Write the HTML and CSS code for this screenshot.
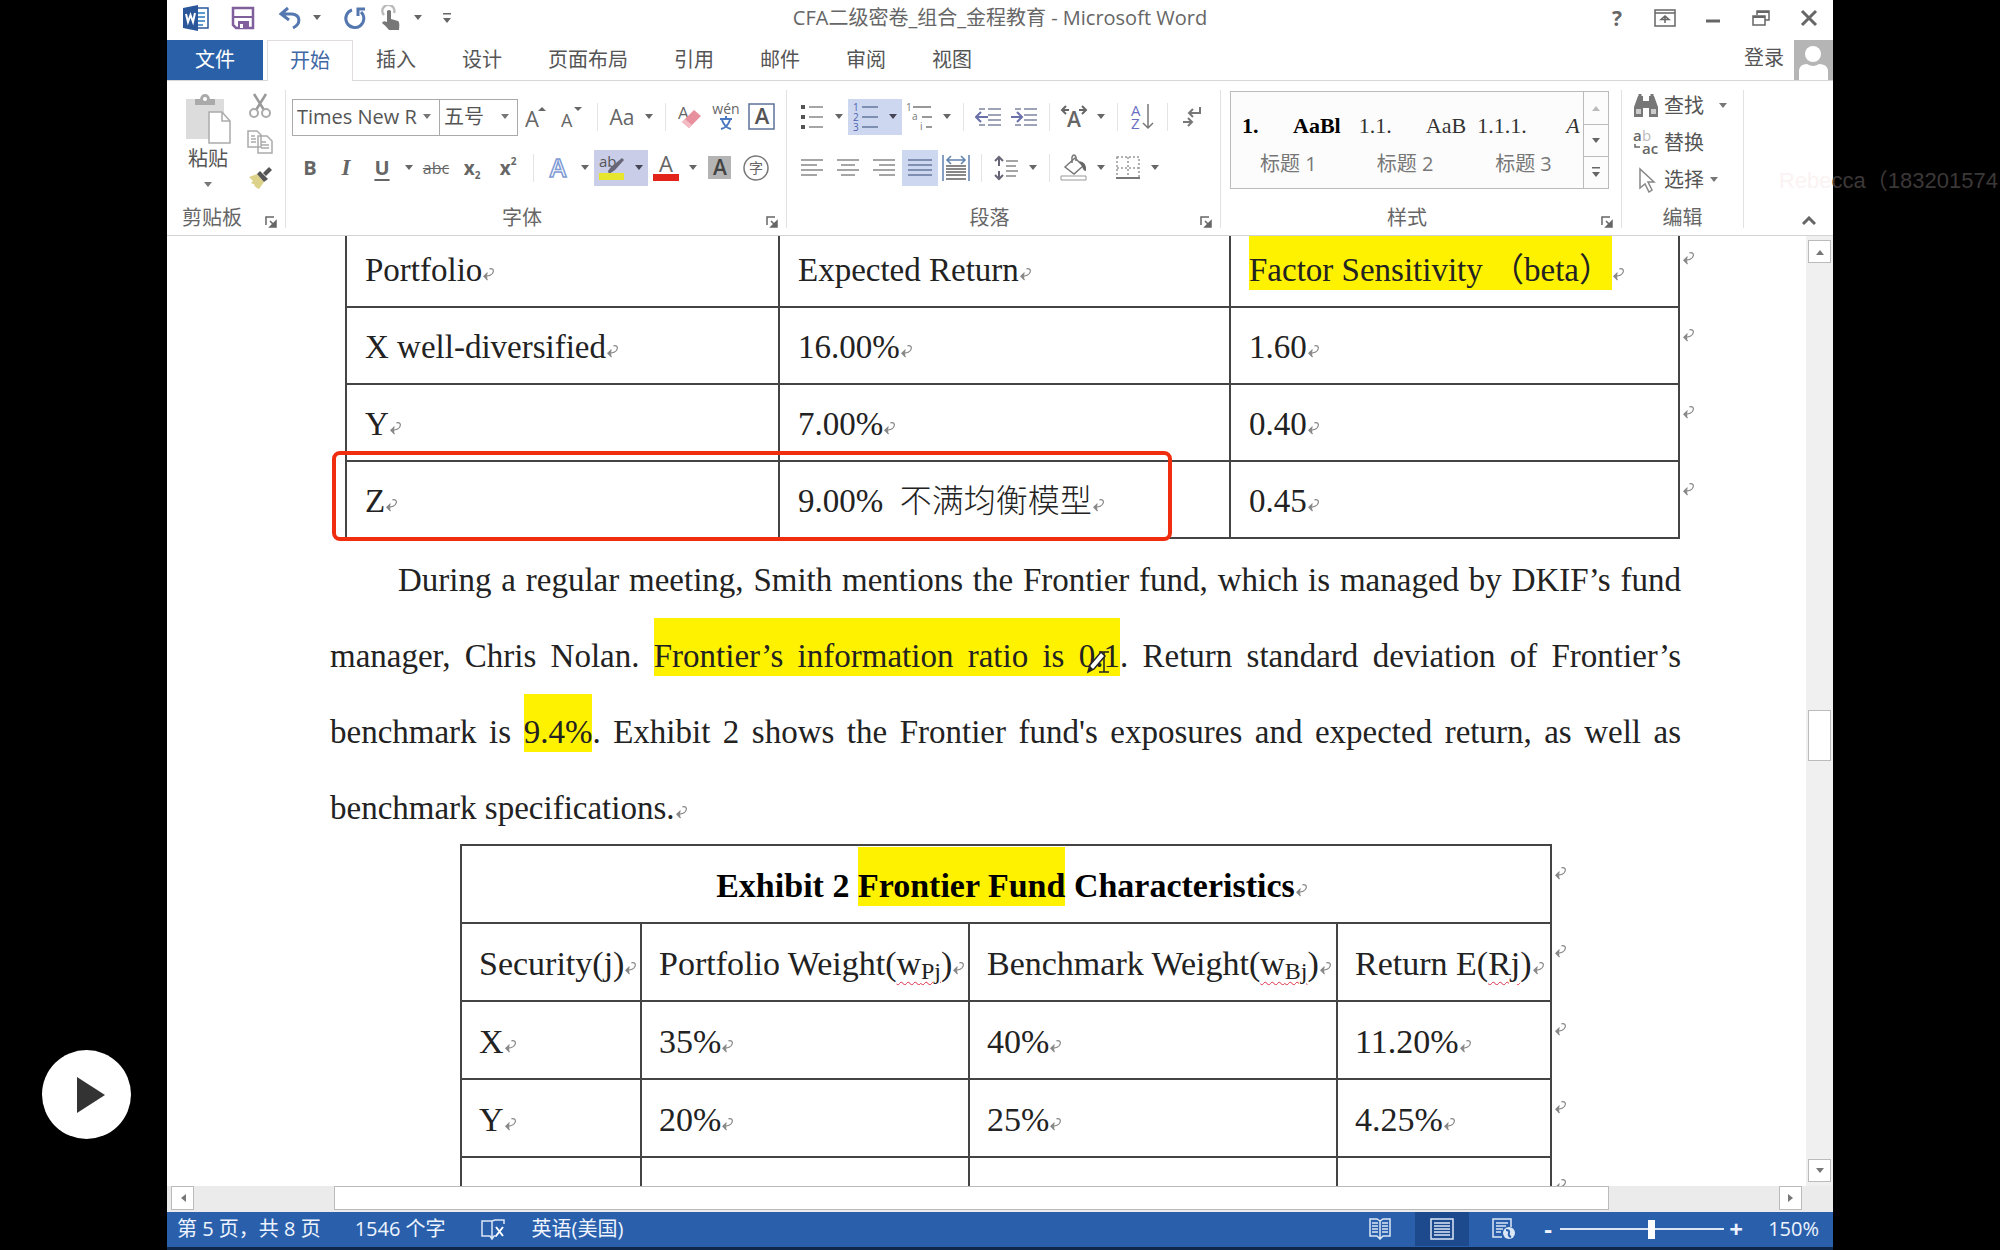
FILE: index.html
```
<!DOCTYPE html>
<html lang="zh-CN">
<head>
<meta charset="utf-8">
<title>CFA二级密卷_组合_金程教育 - Microsoft Word</title>
<link rel="stylesheet" href="styles.css">
</head>
<body>
<svg class="defs" aria-hidden="true">
  <symbol id="ret" viewBox="0 0 14 15"><path d="M8 2c3-1 5 1 4 3.500C11 8.500 7 10 2 10M6 6 2 10l4 4M2.500 10l2.500-2v4z" fill="none" stroke="currentColor" stroke-width="1.300"/></symbol>
  <symbol id="down" viewBox="0 0 10 6"><path d="M1 0h8L5 5z" fill="currentColor"/></symbol>
  <symbol id="launch" viewBox="0 0 12 12"><path d="M1 9V1h8M5 5l5 5M11 5v6H5z" fill="none" stroke="currentColor" stroke-width="1.500"/><path d="M11 5v6H5z" fill="currentColor"/></symbol>
</svg>

<div class="app">
  <header class="titlebar">
    <div class="qat">
      <span class="btn"><svg width="28" height="26" viewBox="0 0 28 26"><path d="M12 3h14v20H12z" fill="#fff" stroke="#2b579a" stroke-width="1.500"/><path d="M16 8h7M16 12h7M16 16h7M16 20h5" stroke="#2b7ac0" stroke-width="1.500"/><path d="M1 3 16 0v26L1 23z" fill="#2b579a"/><path d="m4 9 2 8 2.500-7L11 17l2-9" fill="none" stroke="#fff" stroke-width="2"/></svg></span>
      <button class="btn gap" title="保存"><svg width="24" height="24" viewBox="0 0 24 24"><path d="M2 2h20v20H5l-3-3z" fill="#fff" stroke="#80609c" stroke-width="2.500"/><path d="M3 11h18" stroke="#80609c" stroke-width="2"/><path d="M7 15h11v7H7z" fill="#80609c"/><path d="M9 18h3v4H9z" fill="#fff"/></svg></button>
      <button class="btn gap" title="撤消"><svg width="24" height="24" viewBox="0 0 24 24"><path d="M10 2 3 8l8 6M4 8h10c9 1 9 10 1 14" fill="none" stroke="#5577b0" stroke-width="3"/></svg></button>
      <button class="caret" title="撤消列表"><svg><use href="#down"/></svg></button>
      <button class="btn gap" title="重复"><svg width="24" height="24" viewBox="0 0 24 24"><path d="M9 4a9 9 0 1 0 9 2M15 10V3h7" fill="none" stroke="#5577b0" stroke-width="3"/></svg></button>
      <button class="btn" title="触摸/鼠标模式"><svg width="22" height="26" viewBox="0 0 22 26"><path d="M4 10a6 6 0 1 1 10-2" fill="none" stroke="#bbb" stroke-width="2.500"/><path d="M7 6q2-2 4 0v8l7 2q2 1 1 9H9q-3-4-7-7 1-3 5-1z" fill="#777"/></svg></button>
      <button class="caret" title="模式列表"><svg><use href="#down"/></svg></button>
      <button class="caret gap" title="自定义快速访问工具栏"><svg class="bar-down" viewBox="0 0 10 11"><path d="M1 0h8v1.500H1zM1 5h8L5 10z" fill="currentColor"/></svg></button>
    </div>
    <h1 class="doc-title">CFA二级密卷_组合_金程教育 - Microsoft Word</h1>
    <div class="winbtns">
      <button class="help" title="帮助">?</button>
      <button title="功能区显示选项"><svg width="22" height="18" viewBox="0 0 22 18"><path d="M1 1h20v16H1zM1 4h20M11 14V7M7 10.500 11 7l4 3.500z" fill="none" stroke="#666" stroke-width="1.500"/></svg></button>
      <button title="最小化"><svg width="16" height="18" viewBox="0 0 16 18"><path d="M1 12h14" stroke="#666" stroke-width="3"/></svg></button>
      <button title="向下还原"><svg width="18" height="18" viewBox="0 0 18 18"><path d="M5 6V2h12v9h-4M1 7h12v9H1z" fill="none" stroke="#666" stroke-width="1.500"/><path d="M5 3h12M1 8h12" stroke="#666" stroke-width="2"/></svg></button>
      <button title="关闭"><svg width="18" height="18" viewBox="0 0 18 18"><path d="m2 2 14 14M16 2 2 16" stroke="#666" stroke-width="3"/></svg></button>
    </div>
  </header>

  <nav class="tabs">
    <button class="tab file">文件</button>
    <button class="tab active">开始</button>
    <button class="tab">插入</button>
    <button class="tab">设计</button>
    <button class="tab">页面布局</button>
    <button class="tab">引用</button>
    <button class="tab">邮件</button>
    <button class="tab">审阅</button>
    <button class="tab">视图</button>
    <a class="login" href="#">登录</a>
    <svg class="avatar" viewBox="0 0 39 40"><path d="M0 0h39v40H0z" fill="#b5b5b5"/><circle cx="19" cy="14" r="8" fill="#fff"/><path d="M5 40V30q1-6 8-6 6 4 12 0 8 0 9 6v10z" fill="#fff"/></svg>
  </nav>

  <div class="ribbon">
    <section class="group">
      <div class="clip">
        <button class="paste">
          <svg width="46" height="50" viewBox="0 0 46 50"><path d="M1 5h38v40H1z" fill="#dcdcdc"/><path d="M10 5h5q1-5 5-5t5 5h5v6H10z" fill="#aaa"/><circle cx="20" cy="5" r="2" fill="#fff"/><path d="M24 18h13l8 9v22H24z" fill="#fff" stroke="#aaa" stroke-width="1.500"/><path d="M37 18v9h8" fill="none" stroke="#aaa" stroke-width="1.500"/></svg>
          <span>粘贴</span>
          <svg class="dn"><use href="#down"/></svg>
        </button>
        <div class="clip-side">
          <button title="剪切"><svg width="24" height="26" viewBox="0 0 24 26"><path d="M6 1l10 16M18 1 8 17" stroke="#999" stroke-width="2.500"/><circle cx="6" cy="20" r="4" fill="none" stroke="#aaa" stroke-width="2"/><circle cx="18" cy="20" r="4" fill="none" stroke="#aaa" stroke-width="2"/></svg></button>
          <button title="复制"><svg width="26" height="24" viewBox="0 0 26 24"><path d="M1 1h9l4 4v12H1zM11 6h9l5 5v12H11z" fill="#fff" stroke="#aaa" stroke-width="1.500"/><path d="M4 6h4M4 9h5M4 12h5M14 12h5M14 15h8M14 18h8" stroke="#aaa" stroke-width="1.500"/></svg></button>
          <button title="格式刷"><svg width="26" height="24" viewBox="0 0 26 24"><path d="m2 11 8-3 7 8-5 7q-5-2-5-5-1 0-3-1l2-2z" fill="#ddd28a"/><path d="m10 8 3-3 8 8-4 3z" fill="#555"/><path d="m16 7 6-6 3 3-6 6z" fill="#555"/></svg></button>
        </div>
      </div>
      <footer><span>剪贴板</span><button class="launch" title="剪贴板"><svg><use href="#launch"/></svg></button></footer>
    </section>

    <section class="group">
      <div class="row">
        <select class="font-name" aria-label="字体"><option>Times New Roman</option></select>
        <select class="font-size" aria-label="字号"><option>五号</option></select>
        <button class="btn" title="增大字号"><svg width="22" height="24" viewBox="0 0 22 24"><text x="0" y="22" font-size="22" fill="#666">A</text><path d="m13 6 4-4 4 4z" fill="#666"/></svg></button>
        <button class="btn" title="减小字号"><svg width="22" height="24" viewBox="0 0 22 24"><text x="0" y="22" font-size="18" fill="#666">A</text><path d="m13 2 4 4 4-4z" fill="#666"/></svg></button>
        <i class="sep"></i>
        <button class="btn aa" title="更改大小写">Aa</button><button class="caret" title="大小写选项"><svg><use href="#down"/></svg></button>
        <i class="sep"></i>
        <button class="btn" title="清除格式"><svg width="24" height="26" viewBox="0 0 24 26"><text x="0" y="15" font-size="17" fill="#666">A</text><path d="m4 18 12-12 7 6-12 12z" fill="#e88f9d"/><path d="m4 18 3-3 7 6-3 3z" fill="#f3bcc4"/></svg></button>
        <button class="btn" title="拼音指南"><svg width="28" height="28" viewBox="0 0 28 28"><text x="14" y="11" font-size="14" text-anchor="middle" fill="#666">wén</text><path d="M8 16h12M14 13v3M10 17q3 8 9 9M18 17q-3 8-9 9" fill="none" stroke="#4a78c0" stroke-width="2"/></svg></button>
        <button class="btn" title="字符边框"><svg width="28" height="28" viewBox="0 0 28 28"><path d="M1 1h25v25H1z" fill="#fff" stroke="#5d7299" stroke-width="1.500"/><text x="14" y="21" font-size="22" font-weight="600" text-anchor="middle" fill="#555">A</text></svg></button>
      </div>
      <div class="row">
        <button class="btn b" title="加粗">B</button>
        <button class="btn i" title="倾斜">I</button>
        <button class="btn u" title="下划线">U</button><button class="caret" title="下划线选项"><svg><use href="#down"/></svg></button>
        <button class="btn abc" title="删除线">abc</button>
        <button class="btn x" title="下标">x<sub>2</sub></button>
        <button class="btn x" title="上标">x<sup>2</sup></button>
        <i class="sep"></i>
        <button class="btn" title="文本效果"><svg width="24" height="26" viewBox="0 0 24 26"><text x="12" y="22" font-size="25" font-weight="600" text-anchor="middle" fill="#fff" stroke="#7f9bd4" stroke-width="1.500">A</text></svg></button><button class="caret" title="文本效果选项"><svg><use href="#down"/></svg></button>
        <span class="on hl"><button class="btn" title="突出显示"><svg width="28" height="28" viewBox="0 0 28 28"><text x="1" y="13" font-size="15" fill="#555">ab</text><path d="m10 17 3-4L24 4l2 2-9 10-6 4z" fill="#667"/><path d="M1 19h25v7H1z" fill="#e6e62e"/></svg></button><button class="caret" title="突出显示颜色"><svg><use href="#down"/></svg></button></span>
        <button class="btn" title="字体颜色"><svg width="26" height="28" viewBox="0 0 26 28"><text x="13" y="18" font-size="22" text-anchor="middle" fill="#666">A</text><path d="M0 20h26v7H0z" fill="#e3241b"/></svg></button><button class="caret" title="字体颜色选项"><svg><use href="#down"/></svg></button>
        <button class="btn" title="字符底纹"><svg width="24" height="24" viewBox="0 0 24 24"><path d="M0 0h23v23H0z" fill="#b4b4b4"/><text x="12" y="19" font-size="21" font-weight="600" text-anchor="middle" fill="#444">A</text></svg></button>
        <button class="btn" title="带圈字符"><svg width="28" height="28" viewBox="0 0 28 28"><circle cx="14" cy="14" r="12" fill="none" stroke="#777" stroke-width="1.500"/><text x="14" y="19" font-size="14" text-anchor="middle" fill="#666">字</text></svg></button>
      </div>
      <footer><span>字体</span><button class="launch" title="字体"><svg><use href="#launch"/></svg></button></footer>
    </section>

    <section class="group para">
      <div class="row">
        <button class="btn" title="项目符号"><svg width="24" height="24" viewBox="0 0 24 24"><path d="M1 0h4v4H1zM1 10h4v4H1zM1 20h4v4H1z" fill="#555"/><path d="M9 2h14M9 12h14M9 22h14" stroke="#888" stroke-width="1.500"/></svg></button><button class="caret" title="项目符号库"><svg><use href="#down"/></svg></button>
        <span class="on"><button class="btn" title="编号"><svg width="26" height="28" viewBox="0 0 26 28"><g font-size="10" fill="#4c63b0"><text x="0" y="8">1</text><text x="0" y="18">2</text><text x="0" y="28">3</text></g><path d="M9 4h16M9 14h16M9 24h16" stroke="#66789c" stroke-width="1.500"/></svg></button><button class="caret" title="编号库"><svg><use href="#down"/></svg></button></span>
        <button class="btn" title="多级列表"><svg width="28" height="28" viewBox="0 0 28 28"><g font-size="10" fill="#777"><text x="0" y="8">1</text><text x="6" y="17">a</text><text x="14" y="27">i</text></g><path d="M7 4h18M16 14h10M20 24h6" stroke="#777" stroke-width="1.500"/></svg></button><button class="caret" title="多级列表库"><svg><use href="#down"/></svg></button>
        <i class="sep"></i>
        <button class="btn" title="减少缩进量"><svg width="26" height="20" viewBox="0 0 26 20"><path d="M4 2h6M13 2h13M13 8h13M13 13h13M4 18h6M13 18h13" stroke="#7d86a0" stroke-width="1.500"/><path d="M1 10h12M6 5l-5 5 5 5" fill="none" stroke="#6a70a8" stroke-width="2"/></svg></button>
        <button class="btn" title="增加缩进量"><svg width="26" height="20" viewBox="0 0 26 20"><path d="M4 2h6M13 2h13M13 8h13M13 13h13M4 18h6M13 18h13" stroke="#7d86a0" stroke-width="1.500"/><path d="M0 10h11M6 5l5 5-5 5" fill="none" stroke="#6a70a8" stroke-width="2"/></svg></button>
        <i class="sep"></i>
        <button class="btn" title="中文版式"><svg width="28" height="24" viewBox="0 0 28 24"><text x="14" y="22" font-size="21" font-weight="600" text-anchor="middle" fill="#666">A</text><path d="M9 5H3M6 1 2 5l4 4M19 5h6M22 1l4 4-4 4" fill="none" stroke="#666" stroke-width="2"/></svg></button><button class="caret" title="中文版式选项"><svg><use href="#down"/></svg></button>
        <i class="sep"></i>
        <button class="btn" title="排序"><svg width="24" height="28" viewBox="0 0 24 28"><g font-size="15" fill="#6a6fc0"><text x="1" y="13">A</text><text x="1" y="26">Z</text></g><path d="M18 1v23M13 20l5 5 5-5" fill="none" stroke="#777" stroke-width="1.500"/></svg></button>
        <i class="sep"></i>
        <button class="btn" title="显示编辑标记"><svg width="20" height="22" viewBox="0 0 20 22"><path d="M18 1v6H8M11 3 7 7l4 4M1 16h8M6 12l4 4-4 4" fill="none" stroke="#777" stroke-width="2"/></svg></button>
      </div>
      <div class="row">
        <button class="btn" title="左对齐"><svg width="22" height="18" viewBox="0 0 22 18"><path d="M0 1h22M0 6h16M0 11h22M0 16h16" stroke="#888" stroke-width="1.500"/></svg></button>
        <button class="btn" title="居中"><svg width="22" height="18" viewBox="0 0 22 18"><path d="M0 1h22M4 6h14M0 11h22M4 16h14" stroke="#888" stroke-width="1.500"/></svg></button>
        <button class="btn" title="右对齐"><svg width="22" height="18" viewBox="0 0 22 18"><path d="M0 1h22M6 6h16M0 11h22M6 16h16" stroke="#888" stroke-width="1.500"/></svg></button>
        <button class="btn on" title="两端对齐"><svg width="24" height="18" viewBox="0 0 24 18"><path d="M0 1h24M0 6h24M0 11h24M0 16h24" stroke="#66789c" stroke-width="1.500"/></svg></button>
        <button class="btn" title="分散对齐"><svg width="28" height="26" viewBox="0 0 28 26"><path d="M1 0v26M27 0v26M5 5h18M9 1 5 5l4 4M19 1l4 4-4 4" fill="none" stroke="#6080b0" stroke-width="1.500"/><path d="M4 11h20M4 14h20M4 17h20M4 20h20M4 24h20" stroke="#888" stroke-width="2"/></svg></button>
        <i class="sep"></i>
        <button class="btn" title="行和段落间距"><svg width="24" height="26" viewBox="0 0 24 26"><path d="M5 2v9M1 6l4-4 4 4M5 24v-8M1 20l4 4 4-4" fill="none" stroke="#667" stroke-width="2"/><path d="M12 6h12M12 11h10M12 16h12M12 21h10" stroke="#888" stroke-width="1.500"/></svg></button><button class="caret" title="行距选项"><svg><use href="#down"/></svg></button>
        <i class="sep"></i>
        <button class="btn" title="底纹"><svg width="28" height="28" viewBox="0 0 28 28"><path d="m5 13 10-9 8 8-9 8z" fill="#fff" stroke="#777" stroke-width="1.500"/><path d="M12 9V3q2-4 4 0v4" fill="none" stroke="#777" stroke-width="1.500"/><path d="M19 7q8 1 7 10-3 0-4-5z" fill="#666"/><path d="M1 22h25v4H1z" fill="#fff" stroke="#999"/></svg></button><button class="caret" title="底纹选项"><svg><use href="#down"/></svg></button>
        <button class="btn" title="边框"><svg width="24" height="24" viewBox="0 0 24 24"><path d="M1 1h22v21H1zM12 1v21M1 12h22" fill="none" stroke="#999" stroke-width="1.500" stroke-dasharray="2 2"/><path d="M0 22h24" stroke="#777" stroke-width="2"/></svg></button><button class="caret" title="边框选项"><svg><use href="#down"/></svg></button>
      </div>
      <footer><span>段落</span><button class="launch" title="段落"><svg><use href="#launch"/></svg></button></footer>
    </section>

    <section class="group">
      <div class="gallery">
        <button class="style h1"><b><i>1.</i>AaBl</b><span>标题 1</span></button>
        <button class="style h2"><em><i>1.1.</i>AaB</em><span>标题 2</span></button>
        <button class="style h3"><em><i>1.1.1.</i>A</em><span>标题 3</span></button>
        <div class="gallery-nav">
          <button title="上一行" class="off"><svg class="up"><use href="#down"/></svg></button>
          <button title="下一行"><svg><use href="#down"/></svg></button>
          <button title="其他"><svg class="bar-down" viewBox="0 0 10 11"><path d="M1 0h8v1.500H1zM1 5h8L5 10z" fill="currentColor"/></svg></button>
        </div>
      </div>
      <footer><span>样式</span><button class="launch" title="样式"><svg><use href="#launch"/></svg></button></footer>
    </section>

    <section class="group">
      <div class="edit">
        <button><svg width="26" height="24" viewBox="0 0 26 24"><path d="M5 2h5v5h6V2h5l4 11v10h-9v-9h-6v9H1V13z" fill="#777"/><path d="M3 15h5v5H3zM18 15h5v5h-5z" fill="#ccc"/><path d="M7 0v8M19 0v8" stroke="#777" stroke-width="3"/></svg>查找<svg class="dn far"><use href="#down"/></svg></button>
        <button><svg width="26" height="26" viewBox="0 0 26 26"><g font-size="15" fill="#666"><text x="0" y="11" font-weight="600">a</text><text x="9" y="11" fill="#bbb">b</text><text x="9" y="24" font-weight="600">ac</text></g><path d="M2 14v3h5" fill="none" stroke="#666" stroke-width="1.500"/></svg>替换</button>
        <button><svg width="26" height="26" viewBox="0 0 26 26"><path d="M7 2v19l5-4 4 8 3-2-4-8h6z" fill="#fff" stroke="#888" stroke-width="1.500"/></svg>选择<svg class="dn"><use href="#down"/></svg></button>
      </div>
      <footer><span>编辑</span></footer>
    </section>

    <button class="collapse" title="折叠功能区"><svg width="14" height="10" viewBox="0 0 14 10"><path d="m1 8 6-6 6 6" fill="none" stroke="#666" stroke-width="3"/></svg></button>
  </div>

  <main class="workspace">
    <article class="page">
      <div class="boxed">
        <table class="grid exhibit1">
          <colgroup><col class="c1"><col class="c2"><col class="c3"><col></colgroup>
          <tr><td>Portfolio<svg class="ret"><use href="#ret"/></svg></td><td>Expected Return<svg class="ret"><use href="#ret"/></svg></td><td><mark>Factor Sensitivity （beta）</mark><svg class="ret"><use href="#ret"/></svg></td><td class="eor"><svg class="ret"><use href="#ret"/></svg></td></tr>
          <tr><td>X well-diversified<svg class="ret"><use href="#ret"/></svg></td><td>16.00%<svg class="ret"><use href="#ret"/></svg></td><td>1.60<svg class="ret"><use href="#ret"/></svg></td><td class="eor"><svg class="ret"><use href="#ret"/></svg></td></tr>
          <tr><td>Y<svg class="ret"><use href="#ret"/></svg></td><td>7.00%<svg class="ret"><use href="#ret"/></svg></td><td>0.40<svg class="ret"><use href="#ret"/></svg></td><td class="eor"><svg class="ret"><use href="#ret"/></svg></td></tr>
          <tr><td>Z<svg class="ret"><use href="#ret"/></svg></td><td>9.00%&nbsp; <span class="note">不满均衡模型</span><svg class="ret"><use href="#ret"/></svg></td><td>0.45<svg class="ret"><use href="#ret"/></svg></td><td class="eor"><svg class="ret"><use href="#ret"/></svg></td></tr>
        </table>
        <div class="redbox"></div>
      </div>

      <p>During a regular meeting, Smith mentions the Frontier fund, which is managed by DKIF’s fund manager, Chris Nolan. <mark>Frontier’s information ratio is <span class="pointed">0.1<svg class="pen" viewBox="0 0 26 26"><path d="M14 4h10M14 24h10M19 4v20" stroke="#222" stroke-width="1.500"/><path d="M3 24 5 17 16 4l4 4L9 21z" fill="#fff" stroke="#222" stroke-width="1.500"/><path d="m3 24 2-6 3 3z" fill="#222"/></svg></span></mark>. Return standard deviation of Frontier’s benchmark is <mark>9.4%</mark>. Exhibit 2 shows the Frontier fund's exposures and expected return, as well as benchmark specifications.<svg class="ret"><use href="#ret"/></svg></p>

      <table class="grid exhibit2">
        <colgroup><col class="c1"><col class="c2"><col class="c3"><col class="c4"><col></colgroup>
        <tr><th colspan="4">Exhibit 2 <mark>Frontier Fund</mark> Characteristics<svg class="ret"><use href="#ret"/></svg></th><td class="eor"><svg class="ret"><use href="#ret"/></svg></td></tr>
        <tr><td>Security(j)<svg class="ret"><use href="#ret"/></svg></td><td>Portfolio Weight(<u>w<sub>Pj</sub></u>)<svg class="ret"><use href="#ret"/></svg></td><td>Benchmark Weight(<u>w<sub>Bj</sub></u>)<svg class="ret"><use href="#ret"/></svg></td><td>Return E(<u>Rj</u>)<svg class="ret"><use href="#ret"/></svg></td><td class="eor"><svg class="ret"><use href="#ret"/></svg></td></tr>
        <tr><td>X<svg class="ret"><use href="#ret"/></svg></td><td>35%<svg class="ret"><use href="#ret"/></svg></td><td>40%<svg class="ret"><use href="#ret"/></svg></td><td>11.20%<svg class="ret"><use href="#ret"/></svg></td><td class="eor"><svg class="ret"><use href="#ret"/></svg></td></tr>
        <tr><td>Y<svg class="ret"><use href="#ret"/></svg></td><td>20%<svg class="ret"><use href="#ret"/></svg></td><td>25%<svg class="ret"><use href="#ret"/></svg></td><td>4.25%<svg class="ret"><use href="#ret"/></svg></td><td class="eor"><svg class="ret"><use href="#ret"/></svg></td></tr>
        <tr><td></td><td></td><td></td><td></td><td class="eor"><svg class="ret"><use href="#ret"/></svg></td></tr>
      </table>
    </article>
    <div class="vscroll">
      <button title="向上"><svg class="up"><use href="#down"/></svg></button>
      <i class="before"></i><i class="thumb"></i><i class="after"></i>
      <button title="向下"><svg><use href="#down"/></svg></button>
    </div>
  </main>

  <div class="hscroll">
    <button title="向左"><svg class="left"><use href="#down"/></svg></button>
    <i class="before"></i><i class="thumb"></i><i class="after"></i>
    <button title="向右"><svg class="right"><use href="#down"/></svg></button>
  </div>

  <footer class="status">
    <span>第 5 页，共 8 页</span>
    <span>1546 个字</span>
    <button title="校对"><svg width="26" height="22" viewBox="0 0 26 22"><path d="M12 3v17M12 3H2v15h8l2 3 2-3h3M12 3l3-1h9v4" fill="none" stroke="#dbe6f6" stroke-width="1.500"/><path d="m16 9 7 9M23 9l-7 9" stroke="#fff" stroke-width="2"/></svg></button>
    <span>英语(美国)</span>
    <div class="views">
      <button title="阅读视图"><svg width="22" height="22" viewBox="0 0 22 22"><path d="M11 3v18M11 3 8 1H1v17h7l3 3 3-3h7V1h-7z" fill="none" stroke="#dbe6f6" stroke-width="1.500"/><path d="M3 5h6M3 8h6M3 11h6M3 14h6M13 5h6M13 8h6M13 11h6M13 14h6" stroke="#dbe6f6" stroke-width="1.500"/></svg></button>
      <button title="页面视图" class="cur"><svg width="24" height="22" viewBox="0 0 24 22"><path d="M1 1h22v20H1z" fill="none" stroke="#dbe6f6" stroke-width="1.500"/><path d="M4 5h16M4 8h16M4 11h16M4 14h16M4 17h16" stroke="#dbe6f6" stroke-width="1.500"/></svg></button>
      <button title="Web 版式视图"><svg width="24" height="22" viewBox="0 0 24 22"><path d="M10 19H1V1h18v8" fill="none" stroke="#dbe6f6" stroke-width="1.500"/><path d="M4 5h12M4 8h10M4 11h7M4 14h5" stroke="#dbe6f6" stroke-width="1.500"/><circle cx="17" cy="15" r="6" fill="#dbe6f6"/><path d="M14 12q4 0 3 3t2 4" fill="none" stroke="#2a60ab" stroke-width="2"/></svg></button>
    </div>
    <div class="zoom">
      <button title="缩小">-</button>
      <input type="range" min="0" max="100" value="56" aria-label="显示比例">
      <button title="放大">+</button>
      <span class="pct">150%</span>
    </div>
  </footer>
</div>

<div class="watermark"><span>Rebe</span>cca（183201574</div>
<button class="play" title="播放"><svg width="28" height="36" viewBox="0 0 28 36"><path d="M0 0v36l28-18z" fill="#333"/></svg></button>
</body>
</html>
```
FILE: styles.css
```
* { box-sizing: border-box; }
body {
  margin: 0;
  height: 100vh;
  overflow: hidden;
  position: relative;
  background: #000;
  font: 20px/24px "Open Sans", "Noto Sans CJK SC", sans-serif;
  color: #666;
}
button {
  margin: 0;
  padding: 0;
  border: 0;
  background: none;
  font: inherit;
  color: inherit;
  display: flex;
  align-items: center;
  justify-content: center;
}
svg { display: block; flex: none; }
svg text { font-family: "Open Sans", "Noto Sans CJK SC", sans-serif; }
.defs { position: absolute; width: 0; height: 0; }

.app {
  margin: 0 167px;
  height: 100vh;
  display: flex;
  flex-direction: column;
  background: #fff;
}

/* title bar */
.titlebar {
  height: 40px;
  padding-bottom: 4px;
  display: grid;
  grid-template-columns: 1fr auto 1fr;
  align-items: center;
}
.qat { display: flex; align-items: center; height: 36px; padding-left: 11px; }
.gap { margin-left: 11px; }
.doc-title { margin: 0; font-size: 20px; font-weight: 400; white-space: nowrap; }
.winbtns { display: flex; justify-content: flex-end; height: 36px; }
.winbtns button { width: 48px; }
.help { font-weight: 700; font-size: 21px; }

.btn { width: 36px; height: 36px; display: flex; align-items: center; justify-content: center; }
.caret { width: 18px; height: 36px; }
.caret svg, .dn, .gallery-nav svg, .vscroll svg, .hscroll svg { width: 10px; height: 6px; }
svg.bar-down, .caret svg.bar-down, .gallery-nav svg.bar-down { width: 10px; height: 11px; }

/* tabs */
.tabs { height: 41px; display: flex; border-bottom: 1px solid #d8d8d8; }
.tab { padding: 0 23px; height: 40px; line-height: 38px; color: #555; }
.file { padding: 0 28px; margin-right: 4px; background: #2a60a8; color: #fff; }
.active {
  height: 41px;
  padding: 0 22px;
  border: 1px solid #e0dce0;
  border-bottom: 0;
  background: #fff;
  color: #3f68a5;
}
.login { margin-left: auto; margin-right: 10px; line-height: 36px; color: #555; text-decoration: none; }
.avatar { width: 39px; height: 40px; }

/* ribbon */
.ribbon {
  height: 155px;
  display: grid;
  grid-template-columns: 119fr 501fr 434fr 401fr 122fr 89fr;
  border-bottom: 1px solid #d4d4d4;
}
.group {
  margin: 9px 0 7px;
  border-right: 1px solid #e2e2e2;
  display: flex;
  flex-direction: column;
}
.group footer { margin-top: auto; height: 20px; display: flex; align-items: center; line-height: 20px; }
.group footer span { flex: 1; text-align: center; }
.launch { width: 28px; height: 20px; padding-top: 8px; }
.launch svg { width: 12px; height: 12px; }
.row { display: flex; align-items: center; height: 36px; margin: 9px 0 0 6px; }
.row + .row { margin: 15px 0 0 6px; }
.para .row { margin-left: 7px; }
.sep { width: 14px; height: 28px; background: linear-gradient(#e4e4e4, #e4e4e4) center / 1px 100% no-repeat; }
.on { background: #cdd7f0; }
span.on { display: flex; }
span.on .caret { color: #445; }
.hl { background: #c9cde8; }

select {
  appearance: none;
  height: 37px;
  margin: 0;
  border: 1px solid #aaa;
  border-radius: 0;
  padding: 0 22px 0 4px;
  font: inherit;
  color: #555;
  background: #fff url("data:image/svg+xml,%3Csvg xmlns='http://www.w3.org/2000/svg' width='10' height='6'%3E%3Cpath d='M1 0h8L5 5z' fill='%23777'/%3E%3C/svg%3E") no-repeat right 7px center;
}
.font-name { width: 148px; }
.font-size { width: 78px; border-left: 0; }
.aa { font-size: 21px; }
.b { font-weight: 700; }
.btn.i { font-family: "Liberation Serif", serif; font-style: italic; font-size: 23px; font-weight: 700; }
.u { font-weight: 700; text-decoration: underline; text-underline-offset: 4px; }
.abc { font-size: 16px; text-decoration: line-through; }
.x { font-weight: 700; font-size: 19px; }
.x sub, .x sup { font-size: 10px; line-height: 10px; }
.x sub { align-self: flex-end; margin-bottom: 6px; }
.x sup { align-self: flex-start; margin-top: 6px; }

.clip { display: flex; padding: 4px 12px 0 18px; justify-content: space-between; }
.paste { flex-direction: column; justify-content: flex-start; color: #555; }
.paste span { line-height: 30px; }
.paste .dn { margin-top: 8px; color: #777; }
.clip-side { display: flex; flex-direction: column; gap: 12px; }
.clip-side button { height: 24px; }

.gallery {
  margin: 1px 12px 0 9px;
  height: 98px;
  border: 1px solid #bbb;
  background: #fcfcfc;
  display: grid;
  grid-template-columns: 117fr 117fr 117fr 25px;
}
.style { flex-direction: column; margin-left: 11px; padding-top: 10px; align-items: flex-start; gap: 14px; color: #777; }
.style b, .style em {
  font-family: "Liberation Serif", serif;
  font-size: 22px;
  font-style: normal;
  white-space: nowrap;
  color: #333;
}
.style b { color: #000; }
.style i { display: inline-block; text-align: left; font-style: normal; }
.h1 i { width: 51px; }
.h2 i { width: 67px; }
.h3 i { width: 89px; }
.h3 em { font-style: italic; }
.style > span { padding-left: 18px; }
.gallery-nav { display: grid; grid-template-rows: 1fr 1fr 1fr; border-left: 1px solid #bbb; }
.gallery-nav button + button { border-top: 1px solid #bbb; }
.off { color: #bbb; }
.up { transform: rotate(180deg); }
.left { transform: rotate(90deg); }
.right { transform: rotate(-90deg); }

.edit { display: flex; flex-direction: column; gap: 12px; padding: 3px 0 0 11px; color: #555; }
.edit button { height: 25px; justify-content: flex-start; }
.edit svg:first-child { margin-right: 5px; }
.edit .dn { margin-left: 5px; color: #777; }
.edit .far { margin-left: 14px; }
.collapse { align-self: end; justify-self: end; width: 48px; height: 28px; }

/* document */
.workspace { flex: 1; min-height: 0; display: grid; grid-template-columns: 1fr 27px; }
.page {
  min-height: 0;
  overflow: hidden;
  padding: 0 125px 0 163px;
  font-family: "Liberation Serif", "Noto Sans CJK SC", serif;
  font-size: 33px;
  color: #222;
}
.page p { margin: 3px 0 -2px; line-height: 76px; text-indent: 68px; text-align: justify; }
mark { background: #fff200; color: inherit; padding: 20px 0 2px; }
.ret { display: inline-block; width: 13px; height: 14px; color: #888; vertical-align: 0; }
.boxed { position: relative; margin-top: -7px; }
.redbox {
  position: absolute;
  left: 2px;
  right: 509px;
  bottom: -2px;
  height: 90px;
  border: 4px solid #f12d10;
  border-radius: 8px;
}
.grid { table-layout: fixed; border-collapse: collapse; }
.grid td, .grid th {
  height: 77px;
  padding: 3px 0 0 18px;
  border: 2px solid #444;
  line-height: 40px;
  text-align: left;
  white-space: nowrap;
}
.grid th { color: #000; text-align: center; padding-left: 12px; }
.grid .eor { border: 0; padding: 21px 0 0 2px; vertical-align: top; line-height: 14px; }
.eor .ret { display: block; }
.exhibit1 { margin-left: 15px; width: calc(100% + 8px); }
.exhibit1 .c1 { width: 433px; }
.exhibit1 .c2 { width: 451px; }
.exhibit1 .c3 { width: 449px; }
.exhibit1 tr:first-child mark { padding-top: 40px; }
.exhibit2 { margin-left: 130px; width: calc(100% - 237px); font-size: 34px; }
.exhibit2 td, .exhibit2 th { height: 78px; }
.exhibit2 td { padding-left: 17px; }
.exhibit2 .c1 { width: 180px; }
.exhibit2 .c2 { width: 328px; }
.exhibit2 .c3 { width: 368px; }
.exhibit2 .c4 { width: 214px; }
.exhibit2 u { text-decoration: underline wavy #e0304a 1px; text-underline-offset: 6px; }
.exhibit2 sub { font-size: 24px; line-height: 0; vertical-align: -4px; }
.note { font-size: 32px; font-weight: 300; }
.pointed { position: relative; }
.pen { position: absolute; left: 6px; bottom: 0; width: 26px; height: 26px; }

/* scroll bars */
.vscroll { display: flex; flex-direction: column; padding: 4px 2px; background: #f0f0f0; color: #777; }
.vscroll button, .hscroll button { width: 23px; height: 23px; border: 1px solid #bbb; background: #fff; }
.thumb { border: 1px solid #bbb; background: #fff; }
.vscroll .before { flex: 445; }
.vscroll .thumb { height: 51px; }
.vscroll .after { flex: 397; }
.hscroll { height: 26px; display: flex; padding: 0 31px 2px 4px; background: #ebebeb; color: #777; }
.hscroll button { height: 24px; }
.hscroll .before { flex: 140; }
.hscroll .thumb { flex: 1274; }
.hscroll .after { flex: 170; }

/* status bar */
.status {
  height: 38px;
  padding: 0 14px 4px 10px;
  display: flex;
  align-items: center;
  gap: 34px;
  background: linear-gradient(#2a60ab, #2a60ab) top / 100% 35px no-repeat #10284c;
  color: #eef4ff;
  font-size: 20px;
  white-space: nowrap;
}
.status > button + span { margin-left: -8px; }
.views { margin-left: auto; display: flex; gap: 8px; }
.views button { width: 54px; height: 34px; }
.cur { background: #1d4a8c; }
.zoom { display: flex; align-items: center; margin-left: -29px; }
.zoom button { width: 24px; font-size: 24px; font-weight: 700; }
.zoom input { appearance: none; width: 164px; height: 20px; margin: 0; background: linear-gradient(#dbe6f6, #dbe6f6) center / 100% 2px no-repeat; }
.zoom input::-webkit-slider-thumb { appearance: none; width: 7px; height: 19px; background: #fff; }
.pct { margin-left: 20px; }

/* player overlay */
.watermark {
  position: absolute;
  top: 168px;
  left: calc(100% - 221px);
  font: 22px/26px "Liberation Sans", "Noto Sans CJK SC", sans-serif;
  color: #3c3838;
  white-space: nowrap;
}
.watermark span { color: #fbf3f3; }
.play {
  position: absolute;
  left: 42px;
  bottom: 111px;
  width: 89px;
  height: 89px;
  padding-left: 8px;
  border-radius: 50%;
  background: #fff;
}
```
